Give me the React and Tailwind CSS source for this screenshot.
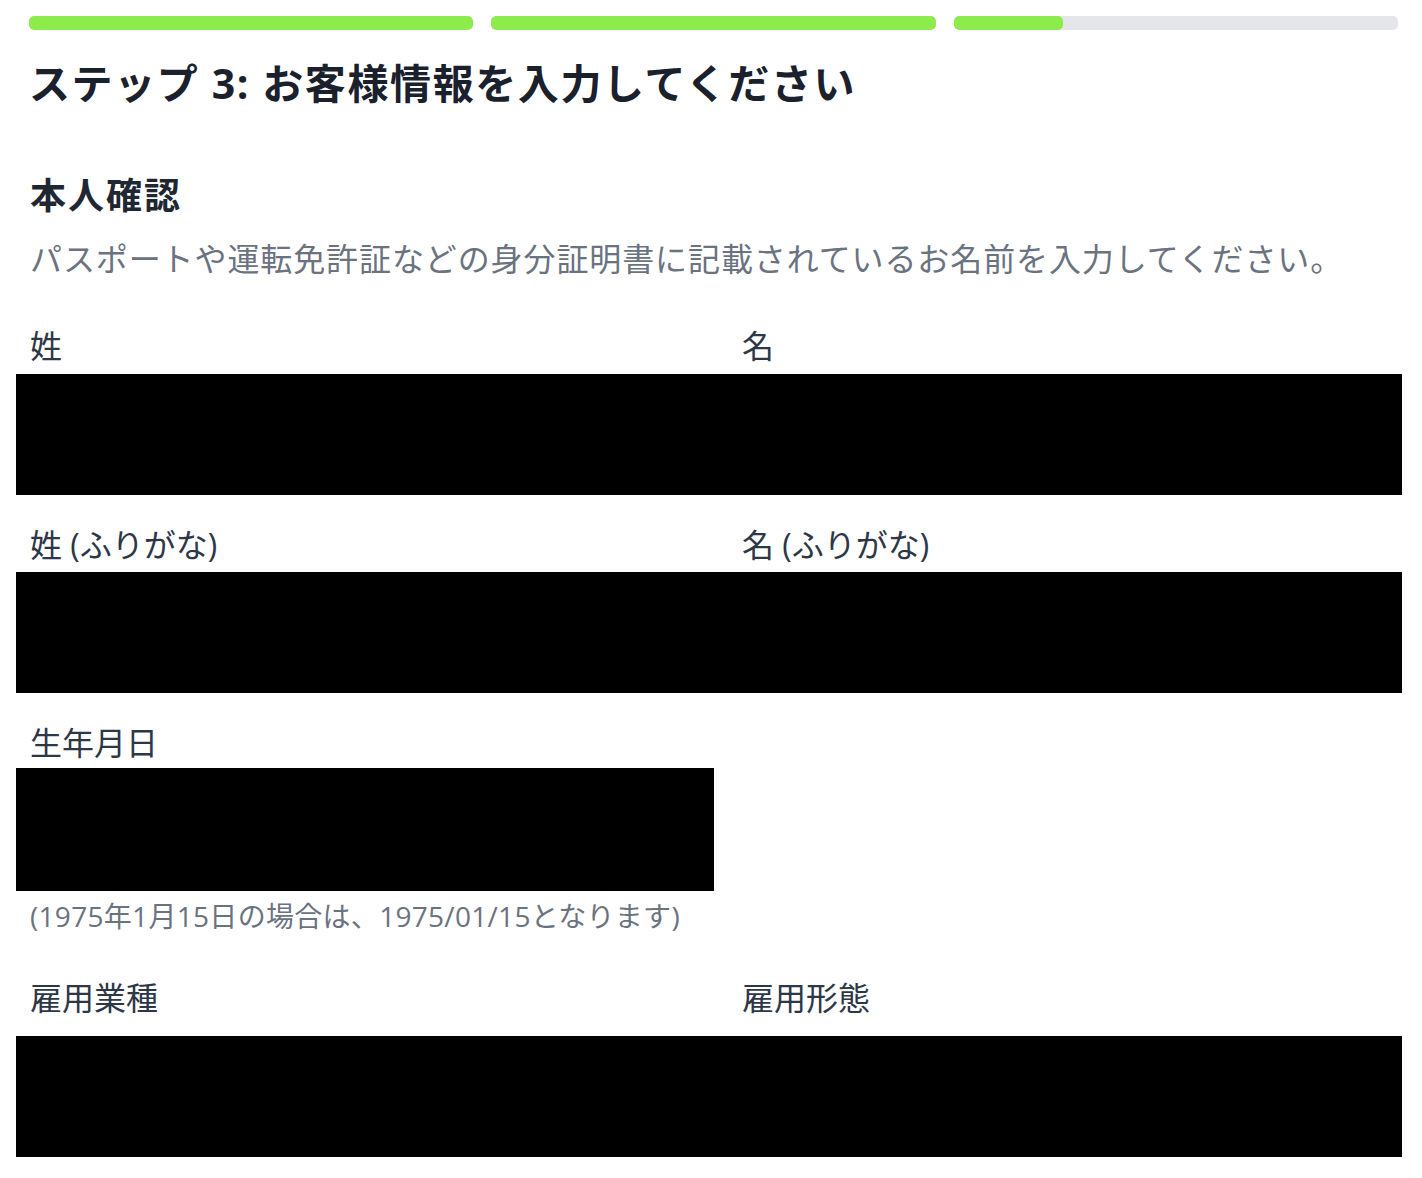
import React from "react";

const font = { fontFamily: '"Open Sans", "Noto Sans CJK JP", sans-serif' };

const Bar = ({ value }) => (
  <div className="h-[14px] flex-1 overflow-hidden rounded-[5px] bg-[#e4e6ea]">
    <div className="h-full rounded-[5px] bg-[#8deb4b]" style={{ width: `${value}%` }} />
  </div>
);

const Redacted = ({ className = "" }) => <div className={`bg-black ${className}`} />;

const Label = ({ children }) => (
  <label className="block pl-[14px] text-[32px] leading-[32px] text-[#2d3748]">
    {children}
  </label>
);

export default function App() {
  return (
    <div className="min-h-[1178px] w-[1422px] bg-white pl-[16px] pr-[20px]" style={font}>
      <div className="ml-[13px] mr-[4px] flex gap-[18px] pt-[16px]">
        <Bar value={100} />
        <Bar value={100} />
        <Bar value={24.5} />
      </div>

      <h1 className="mt-[33px] pl-[13px] text-[41px] font-bold leading-[40px] tracking-[1.6px] text-[#1a202c]">
        ステップ 3: お客様情報を入力してください
      </h1>

      <h2 className="mt-[75px] pl-[14px] text-[36px] font-bold leading-[36px] tracking-[2px] text-[#1f2733]">
        本人確認
      </h2>
      <p className="mt-[29px] pl-[14px] text-[32px] leading-[32px] tracking-[0.9px] text-[#6b7280]">
        パスポートや運転免許証などの身分証明書に記載されているお名前を入力してください。
      </p>

      <div className="mt-[55px] grid grid-cols-[712px_1fr]">
        <Label>姓</Label>
        <Label>名</Label>
      </div>
      <Redacted className="mt-[12px] h-[121px]" />

      <div className="mt-[34px] grid grid-cols-[712px_1fr]">
        <Label>姓 (ふりがな)</Label>
        <Label>名 (ふりがな)</Label>
      </div>
      <Redacted className="mt-[11px] h-[121px]" />

      <div className="mt-[34px]">
        <Label>生年月日</Label>
      </div>
      <Redacted className="mt-[9px] h-[123px] w-[698px]" />
      <p className="mt-[11px] pl-[14px] text-[28px] leading-[28px] tracking-[0.3px] text-[#6b7280]">
        (1975年1月15日の場合は、1975/01/15となります)
      </p>

      <div className="mt-[52px] grid grid-cols-[712px_1fr]">
        <Label>雇用業種</Label>
        <Label>雇用形態</Label>
      </div>
      <Redacted className="mt-[22px] h-[121px]" />
    </div>
  );
}
